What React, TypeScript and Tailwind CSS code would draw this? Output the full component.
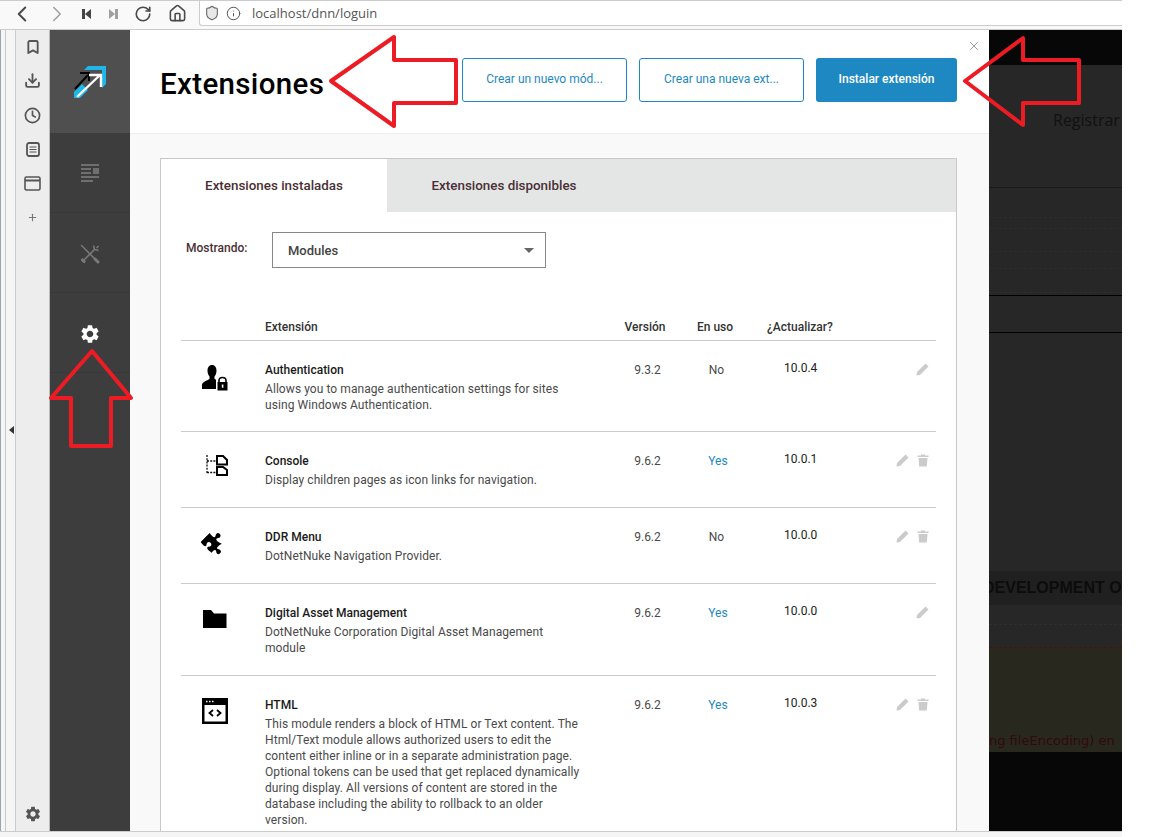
import { ReactNode } from "react";
import {
  Bookmark,
  ChevronLeft,
  ChevronRight,
  Clock,
  Download,
  Info,
  Plus,
  RotateCw,
  Home,
  Shield,
  X,
} from "lucide-react";
import { MdSettings } from "react-icons/md";
import { FaPuzzlePiece } from "react-icons/fa";

interface Extension {
  name: string;
  description: string[];
  version: string;
  inUse: boolean;
  update: string;
  canDelete: boolean;
  icon: ReactNode;
  rowClass: string;
}

function SkipIcon({ flip, color }: { flip?: boolean; color: string }) {
  return (
    <svg width="11" height="12" viewBox="0 0 11 12" className={flip ? "-scale-x-100" : ""}>
      <rect x="1" y="1" width="3" height="10" fill={color} />
      <path d="M10 1 L4 6 L10 11 Z" fill={color} />
    </svg>
  );
}

function ConsoleIcon() {
  return (
    <svg width="22" height="21" viewBox="0 0 22 21" className="mt-[1px] ml-[4px]">
      <path d="M1 0 V18 M1 6 H10 M1 17.5 H10" stroke="#111" strokeWidth="1.3" strokeDasharray="2 1.2" fill="none" />
      <path d="M11 1 H17 L21 5 V9.5 H11 Z" fill="#fff" stroke="#000" strokeWidth="2" />
      <path d="M11 12 H17 L21 15 V20 H11 Z" fill="#fff" stroke="#000" strokeWidth="2" />
    </svg>
  );
}

function HtmlIcon() {
  return (
    <svg width="26" height="26" viewBox="0 0 26 26">
      <rect width="26" height="26" fill="#000" />
      <rect x="2.5" y="7" width="21" height="16.5" fill="#fff" />
      <path d="M4 3.5 H5.5 M7 3.5 H8.5 M10 3.5 H11.5" stroke="#fff" strokeWidth="1.4" />
      <path d="M11 12 L7.5 15 L11 18 M15 12 L18.5 15 L15 18" stroke="#000" strokeWidth="1.8" fill="none" />
    </svg>
  );
}

function UserLockIcon() {
  return (
    <svg width="26" height="26" viewBox="0 0 26 26" className="mt-[2px]">
      <path d="M10 0 C13 0 14.5 2.5 14.5 5.5 C14.5 8.5 13.5 10.5 12.5 11.5 L12.5 14 C14 14.5 15 15 15.5 15.5 L15.5 24 L0 24 L0 20 C0 17 5 15.5 7.5 14 L7.5 11.5 C6.5 10.5 5.5 8.5 5.5 5.5 C5.5 2.5 7 0 10 0 Z" fill="#000" />
      <rect x="14" y="11" width="12" height="15" fill="#fff" />
      <path d="M17 17 V15.5 C17 13.5 18.5 12.5 20.5 12.5 C22.5 12.5 24 13.5 24 15.5 V17" stroke="#000" strokeWidth="1.6" fill="none" />
      <rect x="15.5" y="17" width="10" height="8.5" fill="#000" />
      <rect x="19.8" y="19.5" width="1.6" height="3.2" fill="#fff" />
    </svg>
  );
}

function FolderIcon() {
  return (
    <svg width="24" height="18" viewBox="0 0 24 18" className="mt-[4px]">
      <path d="M0 0 H8 L11 3.5 H23.5 V18 H0 Z" fill="#000" />
    </svg>
  );
}

function PencilIcon() {
  return (
    <svg width="13" height="13" viewBox="0 0 13 13">
      <path d="M9.5 0.5 L12.5 3.5 L4 12 L0.5 12.5 L1 9 Z" fill="#cbcbcb" />
    </svg>
  );
}

function TrashIcon() {
  return (
    <svg width="12" height="13" viewBox="0 0 12 13">
      <path d="M4 0.5 H8 V1.5 H11.5 V3 H0.5 V1.5 H4 Z" fill="#cbcbcb" />
      <path d="M1.5 4 H10.5 L9.8 12.5 H2.2 Z" fill="#cbcbcb" />
    </svg>
  );
}

function ArticleIcon() {
  return (
    <svg width="19" height="18" viewBox="0 0 19 18" fill="#6f6f6f">
      <rect x="0" y="0" width="18" height="2" />
      <rect x="0" y="4" width="10" height="2" />
      <rect x="12" y="4" width="6" height="6" />
      <rect x="0" y="8" width="10" height="2" />
      <rect x="0" y="12" width="18" height="2" />
      <rect x="0" y="16" width="12" height="2" />
    </svg>
  );
}

function ToolsIcon() {
  return (
    <svg width="20" height="20" viewBox="0 0 20 20" fill="none" stroke="#7a7a7a">
      <path d="M4 4 L16.5 16.5" strokeWidth="1.5" />
      <path d="M1 1 L4.5 4.5" strokeWidth="1.2" />
      <path d="M15 15 L18 18" strokeWidth="3" strokeLinecap="round" />
      <path d="M15 5 L4 16" strokeWidth="1.6" />
      <path d="M18.5 2 L16.5 4 M13.5 1.5 L14.5 5.5 L18.5 6.5" strokeWidth="1.5" />
      <path d="M1.5 15 L5 18.5" strokeWidth="2.6" />
    </svg>
  );
}

function Logo() {
  return (
    <svg width="32" height="32" viewBox="0 0 32 32">
      <path d="M14 0 H32 V18 L28 22 V4 H10 Z" fill="#1fb6ea" />
      <path d="M0 32 L0 26 L8 18 L14 24 L6 32 Z" fill="#1fb6ea" />
      <path d="M1 23 L14 9 M6 7 H15 V15" stroke="#000" strokeWidth="2" fill="none" />
      <path d="M3 31 L26 9 M15 9 H27 V21" stroke="#fff" strokeWidth="2.4" fill="none" />
    </svg>
  );
}

const extensions: Extension[] = [
  {
    name: "Authentication",
    description: [
      "Allows you to manage authentication settings for sites",
      "using Windows Authentication.",
    ],
    version: "9.3.2",
    inUse: false,
    update: "10.0.4",
    canDelete: false,
    icon: <UserLockIcon />,
    rowClass: "pb-[18px]",
  },
  {
    name: "Console",
    description: ["Display children pages as icon links for navigation."],
    version: "9.6.2",
    inUse: true,
    update: "10.0.1",
    canDelete: true,
    icon: <ConsoleIcon />,
    rowClass: "pb-[19px]",
  },
  {
    name: "DDR Menu",
    description: ["DotNetNuke Navigation Provider."],
    version: "9.6.2",
    inUse: false,
    update: "10.0.0",
    canDelete: true,
    icon: <FaPuzzlePiece size={22} className="text-black rotate-45 mt-[2px]" />,
    rowClass: "pb-[19px]",
  },
  {
    name: "Digital Asset Management",
    description: [
      "DotNetNuke Corporation Digital Asset Management",
      "module",
    ],
    version: "9.6.2",
    inUse: true,
    update: "10.0.0",
    canDelete: false,
    icon: <FolderIcon />,
    rowClass: "pb-[19px]",
  },
  {
    name: "HTML",
    description: [
      "This module renders a block of HTML or Text content. The",
      "Html/Text module allows authorized users to edit the",
      "content either inline or in a separate administration page.",
      "Optional tokens can be used that get replaced dynamically",
      "during display. All versions of content are stored in the",
      "database including the ability to rollback to an older",
      "version.",
    ],
    version: "9.6.2",
    inUse: true,
    update: "10.0.3",
    canDelete: true,
    icon: <HtmlIcon />,
    rowClass: "pb-[18px]",
  },
];

function ExtensionRow({ ext }: { ext: Extension }) {
  return (
    <div className={`grid grid-cols-[84px_340px_84px_54px_120px_1fr] pt-[22px] border-b border-[#cccccc] ${ext.rowClass}`}>
      <div className="flex justify-center pr-[16px] h-[26px] items-start">{ext.icon}</div>
      <div>
        <div className="-mt-[1px] text-[12px] leading-[16px] font-[480] text-[#1a1a1a]">{ext.name}</div>
        <div className="mt-[3px] text-[12px] leading-[16px] tracking-[0.07px] text-[#4a4a4a] whitespace-nowrap">
          {ext.description.map((line) => (
            <div key={line}>{line}</div>
          ))}
        </div>
      </div>
      <div className="-mt-[1px] text-center pl-[1px] text-[12px] leading-[16px] text-[#4a4a4a]">{ext.version}</div>
      <div className={`-mt-[1px] text-center text-[12px] leading-[16px] ${ext.inUse ? "pl-[4px] text-[#1e88c3]" : "pl-[1px] text-[#4a4a4a]"}`}>
        {ext.inUse ? "Yes" : "No"}
      </div>
      <div className="pl-[41px] text-[12px] leading-[16px] text-[#222] -mt-[3px]">{ext.update}</div>
      <div className="flex justify-end gap-[8px] pr-[7px]">
        <PencilIcon />
        {ext.canDelete && <TrashIcon />}
      </div>
    </div>
  );
}

export default function App() {
  return (
    <div className="w-[1152px] h-[837px] relative overflow-hidden bg-white font-['Roboto',sans-serif]">
      <div className="w-[1122px] h-[30px] flex items-center bg-[#f9f9fa] border-t border-b border-[#cccccc]">
        <div className="w-[199px] flex items-center h-full text-[#4a4a4a] -mt-[3px]">
          <ChevronLeft size={26} strokeWidth={1.8} className="ml-[9px]" />
          <ChevronRight size={26} strokeWidth={1.4} className="ml-[9px] text-[#a0a0a0]" />
          <div className="ml-[11px]"><SkipIcon color="#444" /></div>
          <div className="ml-[16px]"><SkipIcon flip color="#a0a0a0" /></div>
          <RotateCw size={18} strokeWidth={2.2} className="ml-[15px]" />
          <Home size={19} strokeWidth={2} className="ml-[16px]" />
        </div>
        <div className="flex-1 h-[25px] -mt-[3px] bg-white border-l border-b border-[#cccccc] rounded-bl-[3px] flex items-center pl-[4px] text-[#555]">
          <Shield size={16} strokeWidth={1.6} className="text-[#666] fill-[#e8e8e8]" />
          <Info size={15} strokeWidth={1.6} className="ml-[6px]" />
          <span className="ml-[11px] pt-[2px] text-[13px] font-['Open_Sans',sans-serif] text-[#555]">localhost/dnn/loguin</span>
        </div>
      </div>

      <div className="w-[1122px] h-[801px] flex overflow-hidden">
        <div className="w-[16px] shrink-0 bg-[#f5f5f5] border-l border-[#9aa3b0] border-r-[1px] border-r-[#cccccc] relative">
          <div className="absolute left-[8px] top-[396px] w-0 h-0 border-y-[4px] border-y-transparent border-r-[5px] border-r-[#333]" />
          <div className="absolute left-[4px] top-0 bottom-0 w-px bg-[#c8c8c8]" />
        </div>
        <div className="w-[34px] shrink-0 bg-[#ededed] border-r border-[#bbb] flex flex-col items-center text-[#555] relative">
          <Bookmark size={16} strokeWidth={2.8} className="mt-[9px]" />
          <Download size={17} strokeWidth={2.6} className="mt-[17px]" />
          <Clock size={17} strokeWidth={2.4} className="mt-[18px]" />
          <svg width="14" height="15" viewBox="0 0 14 15" fill="none" stroke="#555" className="mt-[18px]">
            <rect x="1" y="1" width="12" height="13" rx="2" strokeWidth="1.8" />
            <path d="M3.5 5 H10.5 M3.5 7.5 H10.5 M3.5 10 H10.5" strokeWidth="1.2" />
          </svg>
          <svg width="17" height="15" viewBox="0 0 17 15" fill="none" stroke="#555" className="mt-[19px]">
            <rect x="1" y="1" width="15" height="13" rx="1.5" strokeWidth="1.6" />
            <path d="M1 4.5 H16" strokeWidth="2" />
          </svg>
          <Plus size={11} strokeWidth={2.4} className="mt-[21px] text-[#777]" />
          <MdSettings size={18} className="absolute bottom-[8px] left-[8px] text-[#555]" />
        </div>

        <div className="w-[80px] shrink-0 bg-[#3d3d3d] flex flex-col">
          <div className="h-[103px] bg-[#4f4f4f] flex items-center justify-center pt-[1px]"><Logo /></div>
          <div className="h-[80px] border-b border-[#383838] flex items-center justify-center"><ArticleIcon /></div>
          <div className="h-[80px] border-b border-[#383838] flex items-center justify-center pt-[2px]"><ToolsIcon /></div>
          <div className="h-[80px] border-b border-[#383838] flex items-center justify-center pt-[3px]">
            <MdSettings size={22} className="text-white" />
          </div>
        </div>

        <div className="w-[859px] shrink-0 bg-[#f9f9f9] flex flex-col overflow-hidden">
          <div className="h-[104px] shrink-0 bg-white border-b border-[#eeeeee] flex items-center relative pl-[30px] pr-[32px]">
            <h1 className="text-[29.5px] leading-[34px] font-[460] text-black pt-[4px] tracking-[0.35px]">Extensiones</h1>
            <div className="ml-auto flex gap-[12px] -mt-[3px]">
              <button className="w-[165px] h-[44px] rounded-[3px] border border-[#1e88c3] bg-white text-[12px] text-[#1e88c3] pb-[3px]">
                Crear un nuevo mód...
              </button>
              <button className="w-[165px] h-[44px] rounded-[3px] border border-[#1e88c3] bg-white text-[12px] text-[#1e88c3] pb-[3px]">
                Crear una nueva ext...
              </button>
              <button className="w-[141px] h-[44px] rounded-[3px] bg-[#1e88c3] text-[12px] font-medium text-white pb-[3px]">
                Instalar extensión
              </button>
            </div>
            <X size={14} strokeWidth={1} className="absolute right-[8px] top-[9px] text-[#555]" />
          </div>

          <div className="flex-1 pt-[24px] pl-[30px] pr-[32px] overflow-hidden">
            <div className="border border-[#c8c8c8] border-b-0 bg-white h-[700px]">
              <div className="flex h-[53px] bg-[#e4e6e5] text-[13.4px] font-[480] text-[#4a2f35]">
                <div className="w-[226px] bg-white flex items-center justify-center pt-[1px]">Extensiones instaladas</div>
                <div className="w-[234px] flex items-center justify-center pt-[1px]">Extensiones disponibles</div>
              </div>
              <div className="flex items-center pt-[20px] pl-[25px]">
                <span className="w-[86px] text-[12px] font-[480] text-[#4a2f35] pb-[4px]">Mostrando:</span>
                <div className="w-[274px] h-[36px] border border-[#888888] flex items-center justify-between pl-[15px] pr-[11px]">
                  <span className="text-[13px] text-[#444] font-[480] pt-[1px]">Modules</span>
                  <div className="w-0 h-0 border-x-[5px] border-x-transparent border-t-[5px] border-t-[#666]" />
                </div>
              </div>
              <div className="mx-[20px] mt-[51px]">
                <div className="grid grid-cols-[84px_340px_84px_54px_120px_1fr] h-[22px] border-b border-[#cccccc] text-[12px] leading-[16px] font-[480] text-[#333]">
                  <div />
                  <div>Extensión</div>
                  <div className="text-center pr-[4px]">Versión</div>
                  <div className="text-center pr-[2px]">En uso</div>
                  <div className="pl-[24px] whitespace-nowrap">¿Actualizar?</div>
                  <div />
                </div>
                {extensions.map((ext) => (
                  <ExtensionRow key={ext.name} ext={ext} />
                ))}
              </div>
            </div>
          </div>
        </div>

        <div className="w-[133px] shrink-0 flex flex-col overflow-hidden bg-[#272727] text-[#111]">
          <div className="h-[35px] shrink-0 bg-[#070707]" />
          <div className="h-[123px] shrink-0 border-b border-[#1a1a1a] pt-[43px] pl-[64px] text-[16px] whitespace-nowrap font-['Open_Sans',sans-serif]">
            Registrar
          </div>
          <div className="h-[30px] shrink-0 border-b border-dashed border-[#2c2c2c]" />
          <div className="h-[11px] shrink-0 border-b border-dashed border-[#2c2c2c]" />
          <div className="h-[23px] shrink-0 border-b border-dashed border-[#2c2c2c]" />
          <div className="h-[17px] shrink-0 border-b border-dashed border-[#2c2c2c]" />
          <div className="h-[24px] shrink-0 border-b border-dashed border-[#2c2c2c]" />
          <div className="h-[3px] shrink-0 border-b border-black" />
          <div className="h-[37px] shrink-0 border-b border-black" />
          <div className="h-[238px] shrink-0" />
          <div className="h-[34px] shrink-0 bg-[#202020] flex items-center text-[16px] font-bold whitespace-nowrap text-[#0c0c0c] font-['Liberation_Sans',sans-serif]">
            <span className="-ml-[6px]">DEVELOPMENT OF THE</span>
          </div>
          <div className="h-[20px] shrink-0 border-b border-dashed border-[#2f2f2f]" />
          <div className="h-[22px] shrink-0" />
          <div className="h-[105px] shrink-0 bg-[#29281f] border-t border-dashed border-[#4a1018] flex items-end whitespace-nowrap text-[13px] leading-[20px] text-[#300a0a] font-['DejaVu_Sans',sans-serif] pb-[1px]">
            ng fileEncoding) en
          </div>
          <div className="flex-1 bg-[#070707]" />
        </div>
      </div>
      <div className="w-[1122px] h-[6px] bg-[#f5f5f5] border-t border-[#cccccc]" />

      <svg className="absolute inset-0 pointer-events-none" width="1152" height="837" fill="none" stroke="#ed1c24" strokeWidth="4" strokeLinejoin="round">
        <path d="M331 81 L394 37 V60 H456 V103 H394 V126 Z" />
        <path d="M965 81 L1023 38 V60 H1079 V103 H1023 V125 Z" />
        <path d="M92 351 L131 398 H111 V446 H71 V398 H51 Z" />
      </svg>
    </div>
  );
}
